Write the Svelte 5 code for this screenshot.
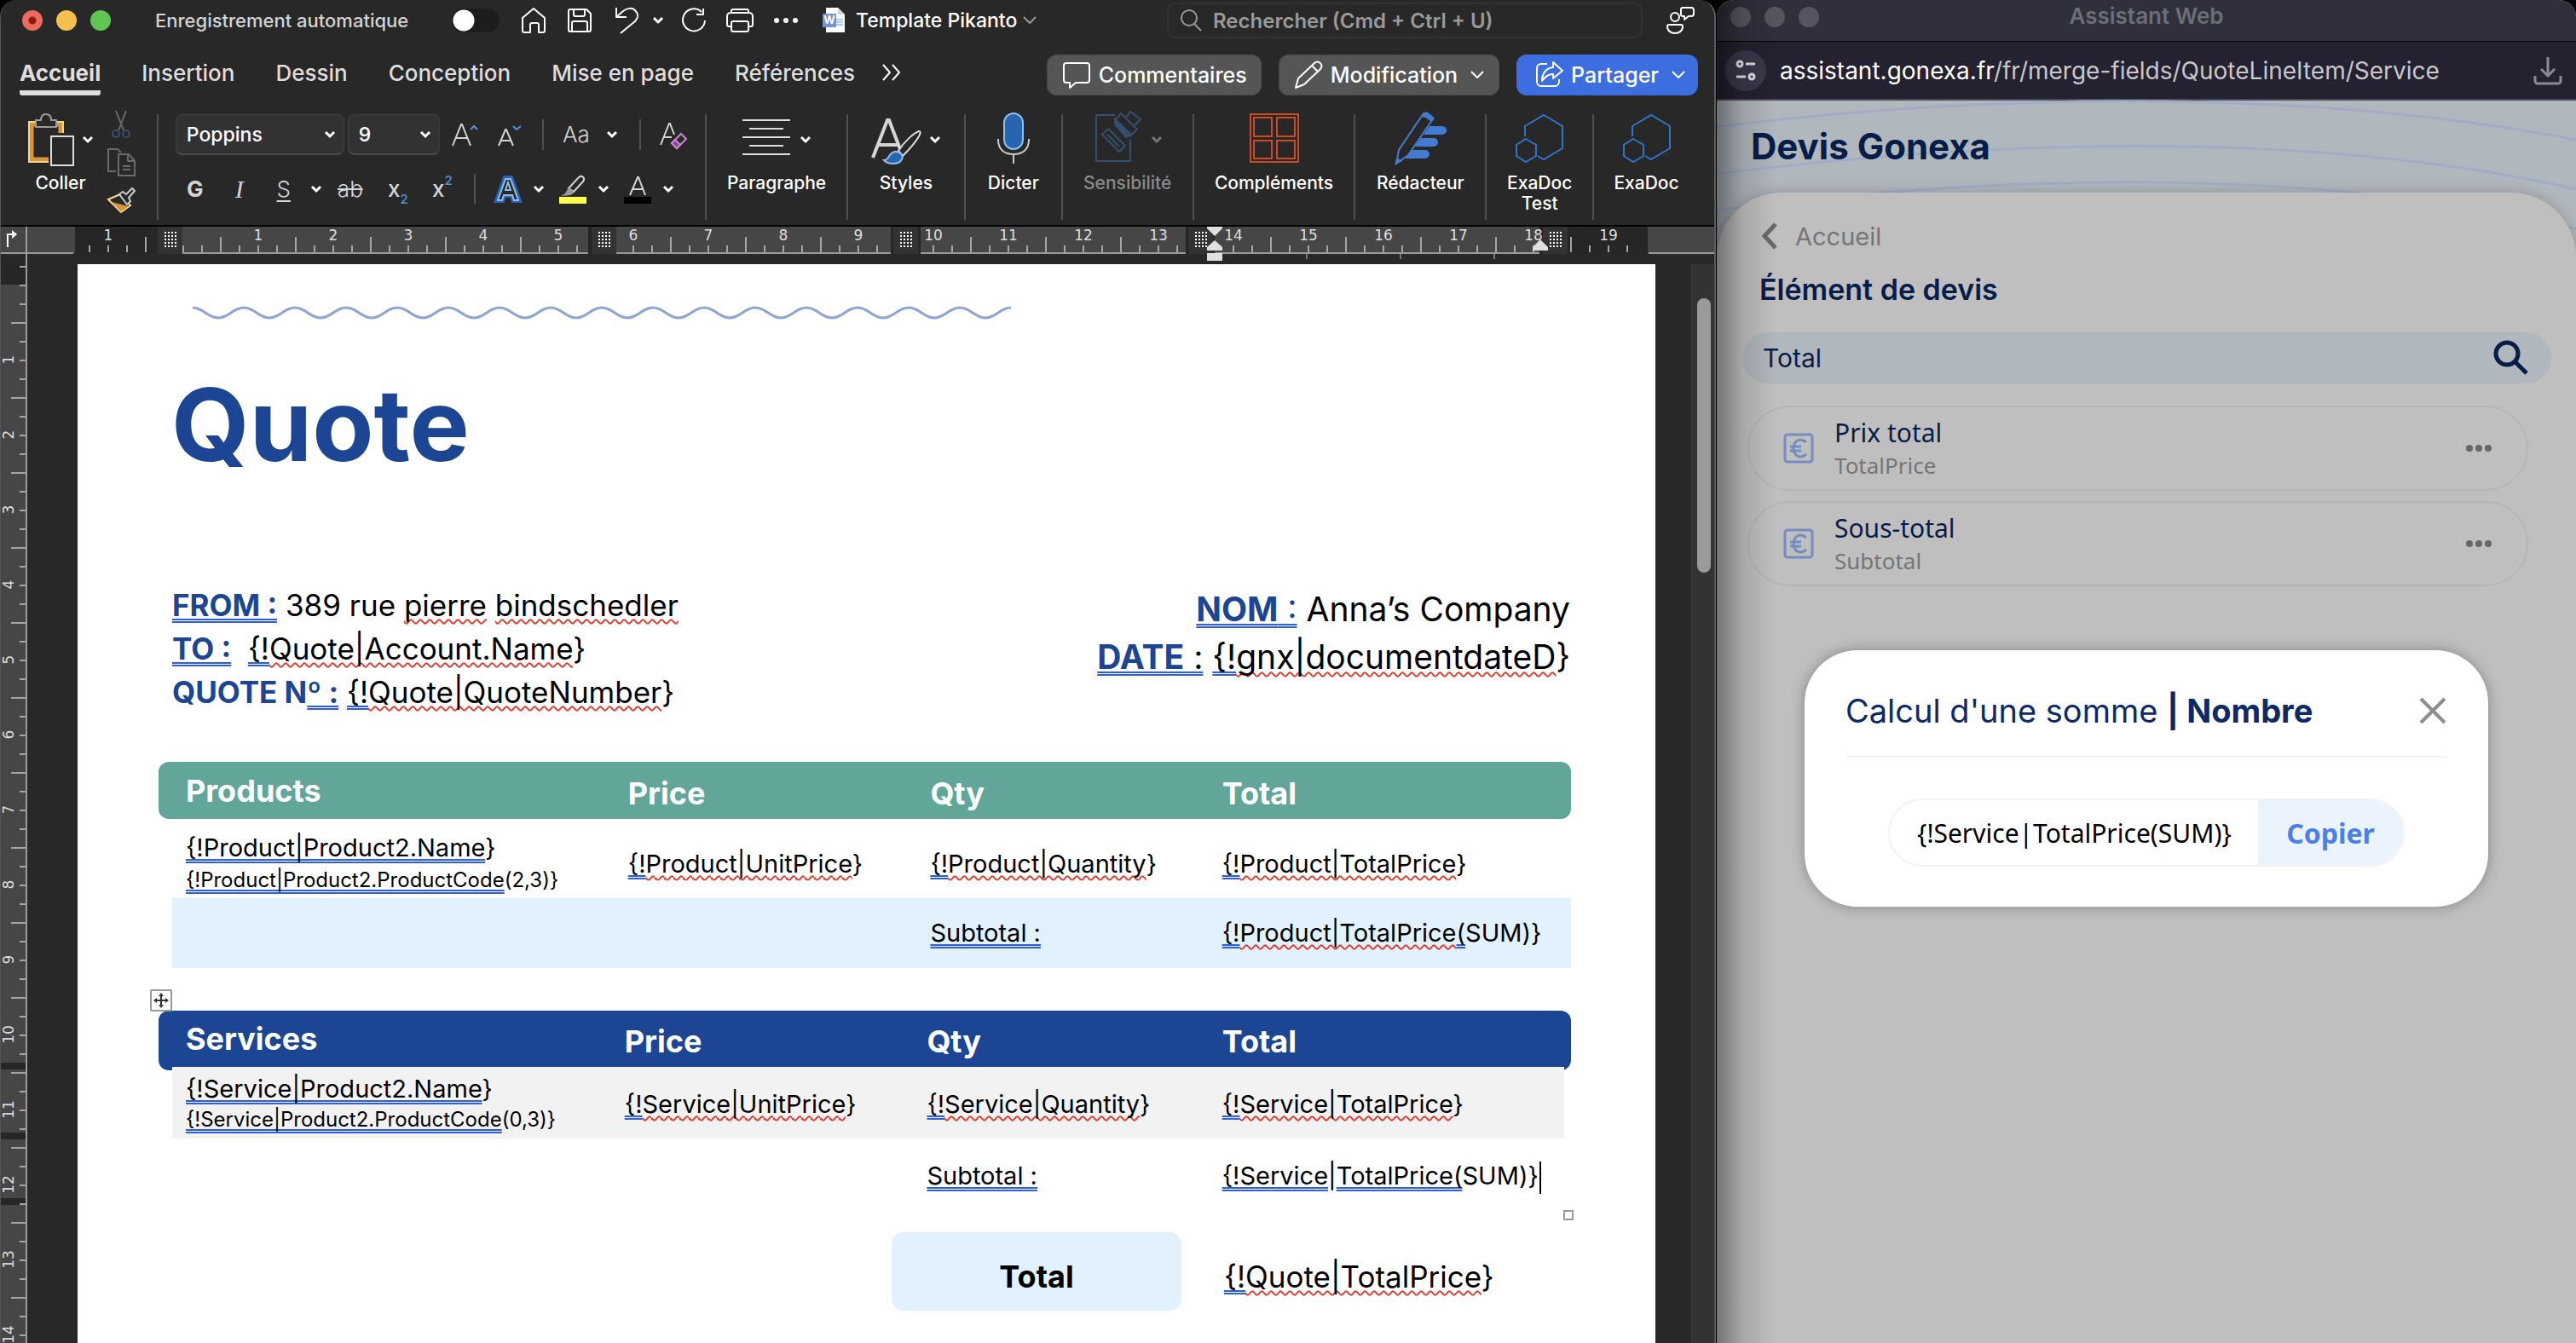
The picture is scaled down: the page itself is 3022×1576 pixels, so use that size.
<script>
  const tabs = ["Insertion", "Dessin", "Conception", "Mise en page", "Références"];

  // text runs: g = grammar mark (double blue), s = spelling mark (red wave)
  const from = [["gb", "FROM :"], ["", " 389 rue "], ["s", "pierre"], ["", " "], ["s", "bindschedler"]];
  const to = [["gb", "TO :"], ["", "\u00a0 "], ["g", "{!"], ["s", "Quote|Account.Name"], ["", "}"]];
  const number = [["b", "QUOTE N"], ["gb", "º :"], ["", " "], ["g", "{!"], ["s", "Quote|QuoteNumber"], ["", "}"]];
  const nom = [["gb", "NOM"], ["gc", " :"], ["", " Anna’s Company"]];
  const date = [["gb", "DATE"], ["g", " :"], ["", " "], ["g", "{!"], ["s", "gnx|documentdateD"], ["", "}"]];
  const total = [["g", "{!"], ["s", "Quote|TotalPrice"], ["", "}"]];

  const field = text => [["g", "{!"], ["s", text], ["", "}"]];

  const tables = [
    {
      name: "Products",
      kind: "products",
      title: [["g", "{!Product|Product2.Name"], ["", "}"]],
      code: [["g", "{!Product|Product2.ProductCode"], ["", "(2,3)}"]],
      cells: [field("Product|UnitPrice"), field("Product|Quantity"), field("Product|TotalPrice")],
      sum: [["g", "{!"], ["s", "Product|TotalPrice"], ["g", "("], ["", "SUM)}"]]
    },
    {
      name: "Services",
      kind: "services",
      title: [["g", "{!Service|Product2.Name"], ["", "}"]],
      code: [["g", "{!Service|Product2.ProductCode"], ["", "(0,3)}"]],
      cells: [field("Service|UnitPrice"), field("Service|Quantity"), field("Service|TotalPrice")],
      sum: [["g", "{!Service"], ["", "|"], ["g", "TotalPrice("], ["", "SUM)}"]]
    }
  ];

  const results = [
    { label: "Prix total", api: "TotalPrice" },
    { label: "Sous-total", api: "Subtotal" }
  ];

  const hasTick = (x, gaps) => !gaps.some(g => x > g[0] && x < g[1]);
  const hGaps = [[180, 213], [686, 723], [1045, 1082], [1391, 1430], [1803, 1838]];
  const hTicks = [];
  for (let i = -5; i < 78; i++) {
    const x = 214 + i * 22;
    if (hasTick(x, hGaps)) hTicks.push({ x, long: (i + 100) % 4 === 2 });
  }
  const hLabels = Array.from({ length: 19 }, (_, i) => i + 1);
  const markers = [184, 693, 1047, 1393, 1809];

  const vTicks = Array.from({ length: 58 }, (_, i) => ({ y: 3 + i * 22, long: i % 4 === 3 }));
  const vLabels = Array.from({ length: 14 }, (_, i) => i + 1);

  let wave = "M2 3";
  for (let i = 0; i < 16; i++) wave += "c13 0 17 12 30 12s17-12 30-12";

  let query = "Total";
  let formula = "{!Service|TotalPrice(SUM)}";
</script>

{#snippet runs(list)}{#each list as [kind, text]}<span class={kind}>{text}</span>{/each}{/snippet}

{#snippet chevron()}
  <svg class="chev" width="16" height="12" viewBox="0 0 16 12"><path d="M3 3l5 5 5-5" /></svg>
{/snippet}

{#snippet thin()}
  <svg class="thin" width="18" height="12" viewBox="0 0 18 12"><path d="M2 2l7 7 7-7" /></svg>
{/snippet}

{#snippet hexes()}
  <svg class="big" width="60" height="60" viewBox="0 0 60 60" fill="none" stroke="#2f74c5" stroke-width="2">
    <path d="M13 26V14L35 1l22 13v26L35 53l-7-4" />
    <path d="M14 29l12 7v13l-12 7-11-7V36z" />
  </svg>
{/snippet}

<div class="desktop">
  <section class="word">
    <header class="titlebar">
      <div class="lights"><i class="red"></i><i class="amber"></i><i class="green"></i></div>
      <label class="autosave">
        <span>Enregistrement automatique</span>
        <input type="checkbox" />
      </label>
      <div class="quick">
        <button aria-label="Accueil">
          <svg width="36" height="36" viewBox="0 0 36 36"><path d="M5 15 18 4l13 11v15a2 2 0 0 1-2 2h-5v-9a2 2 0 0 0-2-2h-6a2 2 0 0 0-2 2v9H7a2 2 0 0 1-2-2z" /></svg>
        </button>
        <button aria-label="Enregistrer">
          <svg width="36" height="36" viewBox="0 0 36 36"><path d="M5 7a2 2 0 0 1 2-2h19l5 5v19a2 2 0 0 1-2 2H7a2 2 0 0 1-2-2zM11 5v6a2 2 0 0 0 2 2h9a2 2 0 0 0 2-2V5M9 31V21a2 2 0 0 1 2-2h14a2 2 0 0 1 2 2v10" /></svg>
        </button>
        <button aria-label="Annuler">
          <svg width="36" height="36" viewBox="0 0 36 36"><path d="M7 3v11h12M7 14l8-7c5-4 11-4 14-1 4 4 4 9 0 13L12 33" /></svg>
        </button>
        <button class="narrow" aria-label="Plus d’annulations">{@render chevron()}</button>
        <button aria-label="Rétablir">
          <svg width="36" height="36" viewBox="0 0 36 36"><path d="M31 18a13 13 0 1 1-4-10M29 4v7h-8" /></svg>
        </button>
        <button aria-label="Imprimer">
          <svg width="36" height="36" viewBox="0 0 36 36"><path d="M8 9V7a2 2 0 0 1 2-2h16a2 2 0 0 1 2 2v2M8 25H5a2 2 0 0 1-2-2V13a4 4 0 0 1 4-4h22a4 4 0 0 1 4 4v10a2 2 0 0 1-2 2h-3M8 21a2 2 0 0 1 2-2h16a2 2 0 0 1 2 2v8a2 2 0 0 1-2 2H10a2 2 0 0 1-2-2z" /></svg>
        </button>
        <button aria-label="Plus">
          <svg width="36" height="36" viewBox="0 0 36 36"><g fill="#fff" stroke="none"><circle cx="7" cy="18" r="3" /><circle cx="18" cy="18" r="3" /><circle cx="29" cy="18" r="3" /></g></svg>
        </button>
      </div>
      <button class="docname">
        <svg class="file" width="32" height="32" viewBox="0 0 32 32">
          <path d="M7 1h14l8 8v21H7z" fill="#fff" />
          <path d="M21 1v8h8z" fill="#d5d5d5" />
          <path d="M19 15h8M19 18h8M19 21h8" stroke="#5b97d8" />
          <rect x="3" y="8" width="16" height="16" fill="#7391d3" />
          <text x="11" y="20" text-anchor="middle" font-size="13" font-weight="700" fill="#fff">W</text>
        </svg>
        Template Pikanto
        {@render thin()}
      </button>
      <label class="search">
        <svg width="28" height="28" viewBox="0 0 28 28"><circle cx="12" cy="11" r="9" /><path d="M18 18l8 8" /></svg>
        <input type="text" aria-label="Rechercher" placeholder="Rechercher (Cmd + Ctrl + U)" />
      </label>
      <button class="people" aria-label="Présence">
        <svg width="36" height="36" viewBox="0 0 36 36"><circle cx="12" cy="14" r="5" /><path d="M5 23h14a2 2 0 0 1 2 2c0 5-4 8-9 8s-9-3-9-8a2 2 0 0 1 2-2zM21 3h10a3 3 0 0 1 3 3v4a3 3 0 0 1-3 3h-3l-5 4v-4h-2a2 2 0 0 1-2-2V5a2 2 0 0 1 2-2z" /></svg>
      </button>
    </header>

    <nav class="tabs">
      <button class="tab active">Accueil</button>
      {#each tabs as tab}
        <button class="tab">{tab}</button>
      {/each}
      <button class="tab" aria-label="Autres onglets">
        <svg width="26" height="24" viewBox="0 0 26 24"><path d="M3 3l8 9-8 9M14 3l8 9-8 9" /></svg>
      </button>
      <div class="actions">
        <button class="pill">
          <svg width="36" height="36" viewBox="0 0 36 36"><path d="M6 4h24a3 3 0 0 1 3 3v17a3 3 0 0 1-3 3H17l-7 6v-6H6a3 3 0 0 1-3-3V7a3 3 0 0 1 3-3z" /></svg>
          Commentaires
        </button>
        <button class="pill">
          <svg width="36" height="36" viewBox="0 0 36 36"><path d="M3 33l3-11L25 4c5-4 11 2 7 7L13 29zM22 7l7 7" /></svg>
          Modification
          {@render thin()}
        </button>
        <button class="pill share">
          <svg width="36" height="36" viewBox="0 0 36 36"><path d="M16 5H9a5 5 0 0 0-5 5v16a5 5 0 0 0 5 5h16a5 5 0 0 0 5-5v-3M23 3l11 10-11 9v-5c-6 0-9 3-13 8 0-8 4-15 13-16z" /></svg>
          Partager
          {@render thin()}
        </button>
      </div>
    </nav>

    <div class="ribbon">
      <div class="group paste">
        <button class="tool">
          <span class="glyph">
            <svg class="big" width="60" height="60" viewBox="0 2 60 60" fill="none">
              <path d="M26 55H6V14h34v10" stroke="#d9953b" stroke-width="5" />
              <path d="M26 58H3V11h40v13" stroke="#f4d88c" stroke-width="2" />
              <path d="M11 9h6c0-5 2-7 6-7s6 2 6 7h6v8H11z" fill="#282828" stroke="#9b9b9b" stroke-width="2" />
              <path d="M29 28h26v34H29z" fill="#282828" stroke="#ddd" stroke-width="2" />
            </svg>
            {@render chevron()}
          </span>
          Coller
        </button>
        <div class="clip">
          <button aria-label="Couper">
            <svg width="34" height="36" viewBox="0 0 34 36" fill="none" stroke-width="2"><path d="M11 2l9 23M23 2l-9 23" stroke="#6a6a6a" /><g stroke="#35506e"><circle cx="11" cy="29" r="4" /><circle cx="23" cy="29" r="4" /></g></svg>
          </button>
          <button aria-label="Copier la sélection">
            <svg width="34" height="36" viewBox="0 0 34 36" fill="none" stroke="#6a6a6a" stroke-width="2"><path d="M11 29H2V3h11l4 4M14 9h12l7 8v17H14zM25 9v8h8M19 23h9M19 27h9" /></svg>
          </button>
          <button aria-label="Reproduire la mise en forme">
            <svg width="34" height="36" viewBox="0 0 34 36" fill="none" stroke-width="2"><path d="M2 18l14-6 12 13-11 8z" stroke="#f4d88c" /><path d="M6 21l19 5-8 6z" fill="#d9953b" /><path d="M15 12l4-3 4 3 7-7 3 3-7 8 2 4-4 4z" fill="#282828" stroke="#ccc" /></svg>
          </button>
        </div>
      </div>

      <div class="group font">
        <div class="row">
          <span class="pick family">
            <select aria-label="Police"><option>Poppins</option></select>
            {@render chevron()}
          </span>
          <span class="pick size">
            <select aria-label="Taille"><option>9</option></select>
            {@render chevron()}
          </span>
          <button class="key" aria-label="Agrandir">
            <svg width="32" height="32" viewBox="0 0 32 32"><path d="M1 29L11 4h1l10 25M5 20h13" /><path d="M22 10l4-4 4 4" stroke="#5294d6" /></svg>
          </button>
          <button class="key" aria-label="Réduire">
            <svg width="32" height="32" viewBox="0 0 32 32"><path d="M3 29l8-19h1l8 19M6 23h11" /><path d="M20 6l4 4 5-4" stroke="#5294d6" /></svg>
          </button>
          <span class="bar"></span>
          <button class="key light">Aa</button>
          <button class="drop" aria-label="Casse">{@render chevron()}</button>
          <span class="bar"></span>
          <button class="key" aria-label="Effacer la mise en forme">
            <svg width="32" height="32" viewBox="0 0 32 32"><path d="M1 28L11 3h1l5 13M5 19h9" /><path d="M14 26l11-11 6 6-11 11z" stroke="#c586cf" /><path d="M14 26l4-4 6 6-4 4z" fill="#8e3f9d" stroke="#c586cf" /></svg>
          </button>
        </div>
        <div class="row">
          <button class="key"><b>G</b></button>
          <button class="key"><i class="serif">I</i></button>
          <button class="key"><u>S</u></button>
          <button class="drop tight" aria-label="Style de soulignement">{@render chevron()}</button>
          <button class="key light"><s>ab</s></button>
          <button class="key shift">x<sub>2</sub></button>
          <button class="key">x<sup>2</sup></button>
          <span class="bar"></span>
          <button class="mark" aria-label="Effets de texte">
            <svg width="32" height="32" viewBox="0 0 32 32"><path d="M2 30L12 2h8l10 28h-8l-2-6h-8l-2 6z" fill="#282828" stroke="#2964b0" stroke-width="4" /><path d="M4 29L13 4h6l9 25h-5l-2-6H11l-2 6zM13 17l3-9 3 9z" stroke="#8fbdea" /></svg>
          </button>
          <button class="drop" aria-label="Choix d’effet">{@render chevron()}</button>
          <button class="mark" aria-label="Surlignage">
            <svg width="32" height="34" viewBox="0 0 32 34"><path d="M11 16L23 3c4-3 8 1 5 5L17 20z" /><path d="M11 15l7 6-5 3-11 1 5-3z" fill="#999" stroke="none" /><path d="M0 26h32v8H0z" fill="#ffff4a" stroke="none" /></svg>
          </button>
          <button class="drop" aria-label="Couleur de surlignage">{@render chevron()}</button>
          <button class="mark" aria-label="Couleur de police">
            <svg width="32" height="34" viewBox="0 0 32 34"><path d="M7 24l9-21h1l8 21M10 17h13" /><path d="M0 26h32v8H0z" fill="#000" stroke="none" /></svg>
          </button>
          <button class="drop" aria-label="Choix de couleur">{@render chevron()}</button>
        </div>
      </div>

      <div class="group">
        <button class="tool">
          <span class="glyph">
            <svg class="big" width="60" height="60" viewBox="0 0 60 60" stroke="#ddd" stroke-width="2"><path d="M2 7h56M10 17h40M2 27h56M10 37h40M2 47h56" /></svg>
            {@render chevron()}
          </span>
          Paragraphe
        </button>
      </div>
      <div class="group">
        <button class="tool">
          <span class="glyph">
            <svg class="big" width="60" height="60" viewBox="0 0 60 60" fill="none">
              <path d="M3 51L20 7h2l13 34M9 36h23" stroke="#d5d5d5" stroke-width="4" />
              <path d="M33 43C40 32 51 22 57 20c3 0 1 4 0 6-4 7-11 15-19 23z" fill="#282828" stroke="#ddd" stroke-width="2" />
              <path d="M16 54c7 0 5-10 14-10 6 0 9 5 7 9-3 6-15 7-21 1z" fill="#2964b0" stroke="#8fbdea" stroke-width="2" />
            </svg>
            {@render chevron()}
          </span>
          Styles
        </button>
      </div>
      <div class="group">
        <button class="tool">
          <span class="glyph">
            <svg class="big" width="60" height="60" viewBox="0 0 60 60" fill="none" stroke-width="2">
              <rect x="19" y="-1" width="22" height="42" rx="11" fill="#2964b0" stroke="#8fbdea" />
              <path d="M12 29v1c0 12 8 17 18 17s18-5 18-17v-1M30 47v11" stroke="#ccc" />
            </svg>
          </span>
          Dicter
        </button>
      </div>
      <div class="group">
        <button class="tool off" disabled>
          <span class="glyph">
            <svg class="big" width="60" height="60" viewBox="0 0 60 60" fill="none" stroke="#35506e" stroke-width="2">
              <path d="M27 1H5v54h40V30M12 24l7-7 20 20-7 7zM18 24l14 14M34-1l19 19-9 8-17-18zM40 4l5-7 12 9-8 8" />
              <path d="M27 6l18 17-5 4-13-15z" fill="#35506e" />
            </svg>
            {@render chevron()}
          </span>
          Sensibilité
        </button>
      </div>
      <div class="group">
        <button class="tool">
          <span class="glyph">
            <svg class="big" width="60" height="60" viewBox="0 0 60 60" fill="none" stroke="#c94a25" stroke-width="2"><path d="M2 0h56v56H2zM6 4h21v22H6zM33 4h21v22H33zM6 31h21v21H6zM33 31h21v21H33z" /></svg>
          </span>
          Compléments
        </button>
      </div>
      <div class="group">
        <button class="tool">
          <span class="glyph">
            <svg class="big" width="60" height="60" viewBox="0 0 60 60">
              <g fill="#437bd0"><path d="M41 14h15a5 5 0 0 1 0 10H34zM31 28h15a5 5 0 0 1 0 10H24zM21 42h15a5 5 0 0 1 0 10H11z" /></g>
              <path d="M34-1l10 8-28 41-14 10 3-16z" fill="#282828" stroke="#437bd0" stroke-width="2" />
              <path d="M36-3c4 1 8 4 11 8l-4 5c-2-4-6-6-11-7zM0 59l3-8 6 4z" fill="#437bd0" />
            </svg>
          </span>
          Rédacteur
        </button>
      </div>
      <div class="group">
        <button class="tool"><span class="glyph">{@render hexes()}</span>ExaDoc<br />Test</button>
      </div>
      <div class="group last">
        <button class="tool"><span class="glyph">{@render hexes()}</span>ExaDoc</button>
      </div>
    </div>

    <div class="hruler">
      <svg width="2010" height="44" viewBox="0 0 2010 44">
        <path d="M0 0h2010v31H0z" fill="#464646" />
        <path d="M87 0h126v32H87zM689 0h33v32h-33zM1044 0h35v32h-35zM1390 0h34v32h-34zM1805 0h127v32h-127z" fill="#262626" />
        <path d="M0 31h85M213 31h476M722 31h322M1079 31h311M1424 31h381M1933 31h77" stroke="#999" stroke-width="2" />
        <path d="M30 0v44" stroke="#999" stroke-width="2" />
        <path d="M8 24V9h7" fill="none" stroke="#fff" stroke-width="2" /><path d="M13 4l6 5-6 5z" fill="#fff" />
        {#each markers as m}
          <rect x={m} y="0" width="29" height="32" fill="#333" />
          <path d="M{m + 8} 7h14M{m + 8} 11h14M{m + 8} 15h14M{m + 8} 19h14M{m + 8} 23h14" stroke="#fff" stroke-width="2" stroke-dasharray="2 2" />
        {/each}
        {#each hTicks as t}
          <path d="M{t.x} {t.long ? 12 : 22}V30" stroke="#a5a5a5" stroke-width="2" />
        {/each}
        <path d="M1532 32v6M1642 32v6M1752 32v6" stroke="#777" stroke-width="2" />
        <text x="126" y="16">1</text>
        {#each hLabels as n}
          <text x={214 + n * 88} y="16">{n}</text>
        {/each}
        <path d="M1415 0h18v2l-9 9-9-9zM1415 28v-4l9-8 9 8v4zM1415 31h18v9h-18zM1797 28v-4l9-9 9 9v4z" fill="#e0e0e0" />
      </svg>
    </div>

    <div class="canvas">
      <div class="vruler">
        <svg width="32" height="1266" viewBox="0 0 32 1266">
          <path d="M0 0h30v1266H0z" fill="#464646" />
          <path d="M0 0h30v24H0zM0 937h30v8H0zM0 1019h30v8H0zM0 1096h30v8H0z" fill="#262626" />
          {#each vTicks as t}
            <path d="M{t.long ? 12 : 22} {t.y}H30" stroke="#a5a5a5" stroke-width="2" />
          {/each}
          <path d="M30 0v1266" stroke="#999" stroke-width="2" />
          {#each vLabels as n}
            <text transform="translate(15 {24 + n * 88}) rotate(-90)">{n}</text>
          {/each}
        </svg>
      </div>

      <article class="page">
        <svg class="wave" width="966" height="18" viewBox="0 0 966 18"><path d={wave} fill="none" stroke="#8fa6d2" stroke-width="3" /></svg>
        <h1>Quote</h1>
        <div class="parties">
          <div class="seller">
            <p>{@render runs(from)}</p>
            <p>{@render runs(to)}</p>
            <p>{@render runs(number)}</p>
          </div>
          <div class="buyer">
            <p>{@render runs(nom)}</p>
            <p>{@render runs(date)}</p>
          </div>
        </div>

        {#each tables as t}
          <div class="frame {t.kind}">
            {#if t.kind === "services"}
              <svg class="move" width="26" height="26" viewBox="0 0 26 26"><rect x="1" y="1" width="24" height="24" rx="1" fill="#fff" stroke="#999" stroke-width="2" /><path d="M13 6v14M6 13h14" stroke="#333" stroke-width="2" /><path d="M13 4l3 4h-6zM13 22l3-4h-6zM4 13l4-3v6zM22 13l-4-3v6z" fill="#333" /></svg>
            {/if}
            <table>
              <colgroup><col class="c1" /><col class="c2" /><col class="c3" /><col /></colgroup>
              <thead>
                <tr><th>{t.name}</th><th>Price</th><th>Qty</th><th>Total</th></tr>
              </thead>
              <tbody>
                <tr class="item">
                  <td>
                    <div>{@render runs(t.title)}</div>
                    <div class="code">{@render runs(t.code)}</div>
                  </td>
                  {#each t.cells as cell}
                    <td>{@render runs(cell)}</td>
                  {/each}
                </tr>
                <tr class="sum">
                  <td></td>
                  <td></td>
                  <td><span class="g">Subtotal :</span></td>
                  <td>{@render runs(t.sum)}{#if t.kind === "services"}<span class="caret"></span>{/if}</td>
                </tr>
              </tbody>
            </table>
            {#if t.kind === "services"}<span class="grip"></span>{/if}
          </div>
        {/each}

        <div class="grand">
          <strong>Total</strong>
          <div>{@render runs(total)}</div>
        </div>
      </article>

      <div class="scroll"><span></span></div>
    </div>
  </section>

  <section class="web">
    <header class="webtitle">
      <div class="lights"><i></i><i></i><i></i></div>
      <span>Assistant Web</span>
    </header>
    <div class="address">
      <button class="site" aria-label="Informations du site">
        <svg width="26" height="26" viewBox="0 0 26 26" fill="none" stroke="#e2e1e6" stroke-width="3"><circle cx="6" cy="5" r="3" /><path d="M13 5h11M2 20h11" /><circle cx="20" cy="20" r="3" /></svg>
      </button>
      <span class="url"><span>assistant.gonexa.fr</span>/fr/merge-fields/QuoteLineItem/Service</span>
      <button class="download" aria-label="Installer">
        <svg width="34" height="36" viewBox="0 0 34 36" fill="none" stroke="#8b8a96" stroke-width="3"><path d="M17 2v22M9 16l8 8 8-8M2 24v6a3 3 0 0 0 3 3h24a3 3 0 0 0 3-3v-6" /></svg>
      </button>
    </div>

    <div class="assistant">
      <svg class="curves" viewBox="0 0 1008 200" preserveAspectRatio="none" fill="none" stroke="#a3acc5" stroke-width="3">
        <path d="M0 31C350-13 720-10 1008 46M0 86C350 42 720 38 1008 104M0 129C350 83 720 80 1008 151" />
      </svg>
      <h2>Devis Gonexa</h2>
      <main class="sheet">
        <a class="back" href="#accueil">
          <svg width="22" height="32" viewBox="0 0 22 32" fill="none" stroke="#6a6a6a" stroke-width="5"><path d="M18 2L5 16l13 14" /></svg>
          Accueil
        </a>
        <h3>Élément de devis</h3>
        <label class="find">
          <input type="text" aria-label="Recherche" bind:value={query} />
          <svg width="42" height="42" viewBox="0 0 42 42" fill="none" stroke="#071d49" stroke-width="5"><circle cx="16" cy="16" r="13" /><path d="M25 25l14 14" /></svg>
        </label>
        <ul>
          {#each results as r}
            <li>
              <svg width="36" height="36" viewBox="0 0 36 36" fill="none" stroke="#728dbf" stroke-width="3"><rect x="2" y="2" width="32" height="32" rx="3" /><path d="M27 11c-7-6-15-2-15 7s8 13 15 7M8 16h13M8 21h13" /></svg>
              <div>
                <b>{r.label}</b>
                <small>{r.api}</small>
              </div>
              <button aria-label="Options de {r.label}">
                <svg width="30" height="12" viewBox="0 0 30 12" fill="#666"><circle cx="4" cy="6" r="4" /><circle cx="15" cy="6" r="4" /><circle cx="26" cy="6" r="4" /></svg>
              </button>
            </li>
          {/each}
        </ul>
      </main>

      <div class="dialog" role="dialog" aria-label="Calcul d'une somme">
        <div class="head">
          <span>Calcul d'une somme <b>| Nombre</b></span>
          <button aria-label="Fermer">
            <svg width="34" height="34" viewBox="0 0 34 34" stroke="#8e8e8e" stroke-width="4"><path d="M3 3l28 28M31 3L3 31" /></svg>
          </button>
        </div>
        <div class="copy">
          <input type="text" aria-label="Formule" bind:value={formula} />
          <button>Copier</button>
        </div>
      </div>
    </div>
  </section>
</div>

<style>
  :global(body) {
    background: #000;
  }

  .desktop {
    display: grid;
    grid-template-columns: minmax(0, 2013fr) minmax(0, 1008fr);
    column-gap: 1px;
    height: 100vh;
    overflow: hidden;
    font-family: Inter, "Liberation Sans", sans-serif;
  }

  button {
    display: flex;
    align-items: center;
    justify-content: center;
    padding: 0;
    border: 0;
    background: none;
    color: inherit;
    font: inherit;
  }

  input,
  select {
    border: 0;
    outline: 0;
    padding: 0;
    background: none;
    color: inherit;
    font: inherit;
  }

  p,
  h1,
  h2,
  h3,
  ul {
    margin: 0;
    padding: 0;
    list-style: none;
  }

  svg {
    flex: none;
    display: block;
    overflow: visible;
  }

  /* word window */
  .word {
    display: flex;
    flex-direction: column;
    min-width: 0;
    box-sizing: border-box;
    border-left: 1px solid #555;
    border-right: 2px solid #5c5c5c;
    border-radius: 20px 20px 0 0;
    background: #282828;
    color: #fff;
    overflow: hidden;
  }

  .lights {
    display: flex;
    gap: 16px;
  }

  .lights i {
    width: 24px;
    height: 24px;
    border-radius: 50%;
  }

  .red {
    background: radial-gradient(circle, #8c1a10 4px, #ed6a5f 5px);
  }

  .amber {
    background: #f5bf4f;
  }

  .green {
    background: #61c554;
  }

  .titlebar {
    display: flex;
    align-items: center;
    height: 48px;
    padding: 0 22px 0 25px;
  }

  .titlebar svg,
  .tabs svg {
    fill: none;
    stroke: #fff;
    stroke-width: 2;
    stroke-linejoin: round;
  }

  .autosave {
    display: flex;
    align-items: center;
    justify-content: space-between;
    width: 404px;
    margin-left: 52px;
    color: #d4d4d4;
    font-size: 22px;
    font-weight: 500;
  }

  .autosave input {
    appearance: none;
    width: 56px;
    height: 28px;
    margin: 0;
    border-radius: 14px;
    background: radial-gradient(circle at 14px 14px, #fff 12px, #1d1d1d 13px);
  }

  .quick {
    display: flex;
    gap: 18px;
    margin-left: 22px;
  }

  .quick .narrow {
    width: 20px;
    margin: 0 -4px 0 -8px;
  }

  .docname {
    gap: 10px;
    margin-left: 22px;
    font-size: 23px;
    font-weight: 500;
  }

  .titlebar .file {
    stroke: none;
    stroke-width: 1;
  }

  .titlebar .thin {
    margin-left: -4px;
    stroke: #999;
  }

  .search {
    display: flex;
    align-items: center;
    gap: 12px;
    box-sizing: border-box;
    width: 558px;
    height: 42px;
    margin-left: auto;
    padding: 0 12px;
    border: 2px solid #333;
    border-radius: 10px;
  }

  .titlebar .search svg {
    stroke: #999;
  }

  .search input {
    flex: 1;
    min-width: 0;
    font-size: 24px;
    font-weight: 600;
  }

  .search input::placeholder {
    color: #999;
    opacity: 1;
  }

  .people {
    margin-left: 26px;
  }

  .tabs {
    display: flex;
    align-items: center;
    gap: 48px;
    box-sizing: border-box;
    height: 72px;
    padding: 8px 19px 0 22px;
    color: #ddd;
    font-size: 26px;
    font-weight: 500;
  }

  .tab {
    flex: none;
    height: 48px;
    padding-bottom: 6px;
    box-sizing: border-box;
  }

  .tab:nth-last-child(2) {
    margin-left: -18px;
  }

  .active {
    font-weight: 700;
    background: linear-gradient(#ddd, #ddd) bottom / 100% 6px no-repeat;
    border-radius: 3px;
  }

  .actions {
    display: flex;
    gap: 20px;
    margin-left: auto;
    color: #fff;
  }

  .pill {
    gap: 8px;
    height: 48px;
    padding: 0 17px;
    border-radius: 12px;
    background: #555;
    box-shadow: inset 0 0 0 1px #4a4a4a;
    font-size: 25px;
  }

  .pill .thin {
    margin-left: 6px;
  }

  .share {
    padding: 0 14px 0 20px;
    background: #3d6edf;
    box-shadow: none;
  }

  .ribbon {
    display: grid;
    grid-template-columns: 185fr 644fr 166fr 138fr 114fr 154fr 190fr 154fr 126fr 141fr;
    height: 124px;
    padding: 14px 0 6px;
    border-bottom: 2px solid #000;
    font-size: 21px;
    line-height: 24px;
    font-weight: 500;
  }

  .group {
    display: flex;
    justify-content: center;
    min-width: 0;
    border-right: 2px solid #505050;
  }

  .group.last {
    border: 0;
    padding-right: 18px;
  }

  .tool {
    flex-direction: column;
    justify-content: flex-start;
    align-items: center;
  }

  .off {
    color: #8a8a8a;
  }

  .glyph {
    display: flex;
    align-items: center;
    gap: 8px;
    height: 60px;
    margin-bottom: 9px;
  }

  .chev {
    fill: none;
    stroke: #fff;
    stroke-width: 3;
  }

  .titlebar .chev {
    stroke-width: 3;
  }

  .off .chev {
    stroke: #777;
  }

  .paste {
    justify-content: flex-start;
    gap: 14px;
    padding-left: 30px;
  }

  .paste .glyph {
    gap: 4px;
  }

  .clip {
    display: flex;
    flex-direction: column;
    gap: 8px;
    margin-top: -6px;
  }

  .clip button {
    height: 36px;
  }

  .group.font {
    flex-direction: column;
    justify-content: flex-start;
    gap: 16px;
    padding-left: 20px;
  }

  .row {
    display: flex;
    align-items: center;
    height: 48px;
  }

  .pick {
    display: flex;
    align-items: center;
    box-sizing: border-box;
    height: 48px;
    margin-right: 4px;
    padding: 0 8px 0 12px;
    border: 1px solid #3f3f3f;
    border-bottom: 2px solid #4c4c4c;
    border-radius: 8px;
    background: #323232;
    font-size: 23px;
  }

  .pick select {
    flex: 1;
    appearance: none;
    min-width: 0;
    line-height: 32px;
  }

  .family {
    width: 198px;
  }

  .size {
    width: 108px;
  }

  .key {
    width: 52px;
    height: 40px;
    color: #d4d4d4;
    font-size: 26px;
  }

  .key:first-child {
    margin-left: -3px;
  }

  .key svg,
  .mark svg {
    fill: none;
    stroke: #d4d4d4;
    stroke-width: 2;
  }

  .light {
    font-weight: 300;
  }

  .key u {
    font-weight: 300;
    text-underline-offset: 4px;
  }

  .serif {
    font-family: "Liberation Serif", serif;
    font-size: 30px;
    font-weight: 400;
  }

  .shift {
    margin-left: 4px;
  }

  sub,
  sup {
    color: #5294d6;
    font-size: 15px;
    line-height: 1;
  }

  sub {
    margin-top: 22px;
  }

  sup {
    margin-bottom: 22px;
  }

  .drop {
    width: 32px;
    height: 40px;
    margin-right: 4px;
  }

  .tight {
    width: 24px;
    margin-right: 2px;
  }

  .mark {
    width: 40px;
    height: 40px;
  }

  .bar {
    width: 2px;
    height: 36px;
    margin: 0 18px 0 11px;
    background: #505050;
  }

  .row:first-child .bar {
    margin: 0 12px;
  }

  .hruler {
    height: 44px;
    overflow: hidden;
  }

  .hruler text,
  .vruler text {
    fill: #ddd;
    font-family: "DejaVu Sans", sans-serif;
    font-size: 17px;
    text-anchor: middle;
  }

  .canvas {
    flex: 1;
    display: flex;
    min-height: 0;
  }

  .vruler {
    width: 32px;
    overflow: hidden;
  }

  /* document page */
  .page {
    flex: 1;
    min-width: 0;
    margin: 0 42px 0 58px;
    padding: 48px 99px 0 95px;
    overflow: hidden;
    background: #fff;
    color: #000;
  }

  .wave {
    margin-left: 38px;
  }

  h1 {
    margin: 66px 0 131px 15px;
    color: #1c4594;
    font-size: 118px;
    line-height: 112px;
    font-weight: 700;
  }

  .parties {
    display: flex;
    justify-content: space-between;
    padding: 0 1px 0 16px;
    margin-bottom: 56px;
    white-space: nowrap;
  }

  .seller {
    font-size: 35px;
    line-height: 51px;
  }

  .buyer {
    padding-top: 2px;
    font-size: 39px;
    line-height: 56px;
    text-align: right;
  }

  .g,
  .gb,
  .gc {
    text-decoration: underline double #2f5fd6 2px;
    text-decoration-skip-ink: none;
    text-underline-offset: 3px;
  }

  .s {
    text-decoration: underline wavy #e0392b 2px;
    text-decoration-skip-ink: none;
    text-underline-offset: 3px;
  }

  .b,
  .gb {
    font-weight: 700;
  }

  .b,
  .gb,
  .gc {
    color: #1c4594;
  }

  .frame {
    position: relative;
    margin-bottom: 50px;
    isolation: isolate;
  }

  .frame + .frame {
    margin-bottom: 26px;
  }

  /* rounded bar behind the header row */
  .frame::before {
    content: "";
    position: absolute;
    inset: 0 0 auto;
    z-index: -1;
    height: 67px;
    border-radius: 12px;
    background: #62a69a;
  }

  .services::before {
    height: 70px;
    background: #1c4594;
  }

  table {
    width: 100%;
    table-layout: fixed;
    border-collapse: separate;
    border-spacing: 0;
    font-size: 29px;
    line-height: 38px;
    white-space: nowrap;
  }

  .c1 {
    width: 33%;
  }

  .c2 {
    width: 21.4%;
  }

  .c3 {
    width: 20.9%;
  }

  th {
    height: 67px;
    padding: 6px 0 0;
    box-sizing: border-box;
    color: #fff;
    font-size: 36px;
    font-weight: 700;
    text-align: left;
  }

  .services th {
    height: 66px;
  }

  th:first-child {
    padding: 0 0 0 32px;
  }

  .products th:nth-child(2),
  .products th:nth-child(3),
  .products td:nth-child(2),
  .products td:nth-child(3) {
    padding-left: 4px;
  }

  td {
    height: 93px;
    box-sizing: border-box;
    padding: 12px 0 0;
  }

  td:first-child {
    padding-left: 16px;
    border-left: 16px solid transparent;
    background-clip: padding-box;
  }

  .code {
    font-size: 24px;
  }

  .services table {
    line-height: 36px;
  }

  .services td {
    height: 84px;
    padding-top: 4px;
  }

  .services .item td {
    background-color: #f2f2f2;
  }

  .services .item td:last-child {
    border-right: 8px solid transparent;
    background-clip: padding-box;
  }

  .products .sum td {
    height: 82px;
    padding-top: 0;
    background-color: #e2f1fe;
  }

  .caret {
    display: inline-block;
    width: 2px;
    height: 38px;
    margin: -4px 0 -4px 1px;
    background: #000;
    vertical-align: middle;
  }

  .move {
    position: absolute;
    left: -10px;
    top: -25px;
  }

  .grip {
    position: absolute;
    right: -3px;
    bottom: -12px;
    width: 8px;
    height: 8px;
    border: 2px solid #999;
    background: #fff;
  }

  .grand {
    display: flex;
    align-items: center;
    font-size: 35px;
  }

  .grand strong {
    box-sizing: border-box;
    width: 340px;
    height: 92px;
    margin-left: auto;
    padding-top: 12px;
    border-radius: 14px;
    background: #e2f1fe;
    font-size: 36px;
    line-height: 80px;
    text-align: center;
  }

  .grand div {
    width: 457px;
    padding: 12px 0 0 50px;
    box-sizing: border-box;
  }

  .scroll {
    width: 27px;
    padding-top: 40px;
    box-sizing: border-box;
    border-left: 1px solid #3d3d3d;
    background: #333;
  }

  .scroll span {
    display: block;
    width: 16px;
    height: 322px;
    margin-left: 6px;
    border-radius: 8px;
    background: #9a9a9a;
  }

  /* browser window */
  .web {
    position: relative;
    display: flex;
    flex-direction: column;
    min-width: 0;
    border-radius: 20px 20px 0 0;
    background: #b0b7bd;
    overflow: hidden;
  }

  .web::after {
    content: "";
    position: absolute;
    inset: 0 auto 0 0;
    width: 70px;
    background: linear-gradient(90deg, rgba(0, 0, 0, 0.4), rgba(0, 0, 0, 0.12) 30px, transparent);
    pointer-events: none;
  }

  .webtitle {
    display: grid;
    grid-template-columns: 1fr auto 1fr;
    height: 48px;
    padding: 0 16px;
    border-bottom: 1px solid #000;
    background: #2f303c;
    color: #6d6e78;
    font-size: 26px;
    line-height: 38px;
    font-weight: 600;
  }

  .webtitle .lights {
    padding-top: 8px;
  }

  .webtitle i {
    background: #54555f;
  }

  .address {
    display: flex;
    align-items: center;
    height: 67px;
    padding: 0 16px 0 10px;
    border-bottom: 2px solid #4b4954;
    background: #242230;
    color: #c8c7cd;
    font-size: 28px;
  }

  .site {
    width: 48px;
    height: 48px;
    margin-right: 16px;
    border-radius: 50%;
    background: #3a384a;
  }

  .url {
    flex: 1;
    white-space: nowrap;
  }

  .url span {
    color: #fff;
  }

  .assistant {
    position: relative;
    flex: 1;
    display: flex;
    flex-direction: column;
    color: #071d49;
  }

  .curves {
    position: absolute;
    width: 100%;
    height: 200px;
  }

  h2 {
    position: relative;
    height: 108px;
    padding-left: 40px;
    box-sizing: border-box;
    font-size: 42px;
    line-height: 108px;
    font-weight: 700;
  }

  .sheet {
    position: relative;
    flex: 1;
    padding: 24px 29px 0 30px;
    border-radius: 76px 76px 0 0;
    background: #bfbfbf;
    box-shadow: 0 0 16px rgba(0, 0, 0, 0.2);
  }

  .back {
    display: flex;
    align-items: center;
    gap: 19px;
    height: 54px;
    padding-left: 21px;
    color: #757575;
    font-size: 29px;
    text-decoration: none;
  }

  h3 {
    margin: 10px 0 0 20px;
    font-size: 34px;
    line-height: 52px;
    font-weight: 600;
  }

  .find {
    display: flex;
    align-items: center;
    height: 60px;
    margin-top: 24px;
    padding: 0 26px 0 24px;
    border-radius: 30px;
    background: #b0b7bd;
    font-size: 30px;
  }

  .find input {
    flex: 1;
    min-width: 0;
  }

  ul {
    display: flex;
    flex-direction: column;
    gap: 12px;
    margin: 26px 27px 0 6px;
    font-family: "Noto Sans", sans-serif;
  }

  li {
    display: flex;
    align-items: center;
    box-sizing: border-box;
    height: 100px;
    padding: 0 41px 0 40px;
    border: 2px solid #b5b5b5;
    border-radius: 50px;
  }

  li div {
    flex: 1;
    display: flex;
    flex-direction: column;
    margin-left: 24px;
  }

  li b {
    font-size: 30px;
    line-height: 40px;
    font-weight: 400;
  }

  li small {
    color: #757575;
    font-size: 26px;
    line-height: 36px;
  }

  .dialog {
    position: absolute;
    top: 645px;
    left: 50%;
    width: 802px;
    height: 301px;
    box-sizing: border-box;
    padding: 0 48px;
    transform: translateX(-50%);
    border-radius: 62px;
    background: #fff;
    box-shadow: 0 0 16px rgba(0, 0, 0, 0.3);
  }

  .head {
    display: flex;
    justify-content: space-between;
    align-items: center;
    height: 126px;
    padding-top: 18px;
    box-sizing: border-box;
    border-bottom: 2px solid #f2f2f2;
    color: #0c2a66;
    font-size: 38px;
  }

  .copy {
    display: flex;
    box-sizing: border-box;
    width: 606px;
    height: 80px;
    margin: 48px auto 0;
    border: 2px solid #f2f2f2;
    border-radius: 40px;
    overflow: hidden;
    color: #000;
    font-family: "Noto Sans", sans-serif;
    font-size: 30px;
  }

  .copy input {
    flex: 1;
    min-width: 0;
    padding-left: 32px;
  }

  .copy button {
    width: 170px;
    background: #ebf3fd;
    color: #4c7fe8;
    font-size: 32px;
    font-weight: 700;
  }
</style>
